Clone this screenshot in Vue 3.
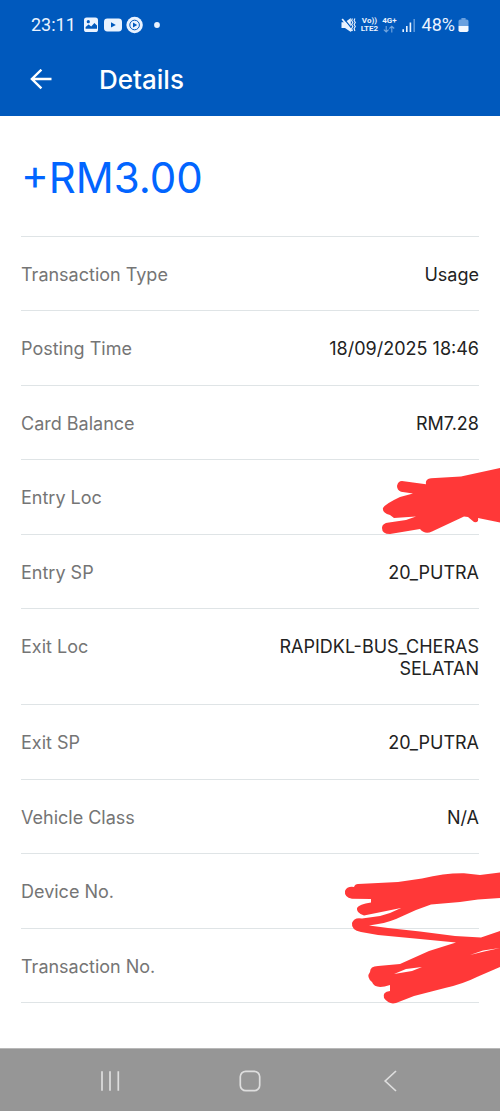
<script setup>
const rows = [
  { label: 'Transaction Type', value: 'Usage' },
  { label: 'Posting Time', value: '18/09/2025 18:46' },
  { label: 'Card Balance', value: 'RM7.28' },
  { label: 'Entry Loc', value: '', mark: 'entry' },
  { label: 'Entry SP', value: '20_PUTRA' },
  { label: 'Exit Loc', value: 'RAPIDKL-BUS_CHERAS SELATAN' },
  { label: 'Exit SP', value: '20_PUTRA' },
  { label: 'Vehicle Class', value: 'N/A' },
  { label: 'Device No.', value: '', mark: 'device' },
  { label: 'Transaction No.', value: '' },
]
</script>

<template>
  <div class="page">
    <header class="top">
      <div class="status">
        <span class="time">23:11</span>
        <svg class="notices" width="78" height="18" viewBox="0 0 78 18" aria-hidden="true">
          <rect x="1" y="1.5" width="14" height="14.5" rx="2.6" fill="#eaf3ff" />
          <circle cx="5.3" cy="5.7" r="1.6" fill="#0059bd" />
          <path d="M2.6 12.8V11l3-2.6 2.6 2.2 3.2-3.7 2.6 2.6v3.3z" fill="#0059bd" />
          <rect x="21" y="2.5" width="18" height="13" rx="3.4" fill="#eaf3ff" />
          <path d="M28 6.2v5.4l4.8-2.7z" fill="#0059bd" />
          <circle cx="51.6" cy="9" r="8.2" fill="#eaf3ff" />
          <circle cx="51.6" cy="9" r="4.8" fill="none" stroke="#0059bd" stroke-width="1" />
          <path d="M50 6.4v5.2l4.2-2.6z" fill="#0059bd" />
          <circle cx="74" cy="9" r="2.9" fill="#eaf3ff" />
        </svg>
        <span class="spacer"></span>
        <svg width="16" height="18" viewBox="0 0 16 18" aria-hidden="true">
          <path d="M.5 6.3H4L9.800 2v14L4 12H.5z" fill="#eaf3ff" />
          <path d="M2.600 2.300 11 12.600" stroke="#0059bd" stroke-width="1.300" />
          <path d="M1.200 2.900 10.600 15" stroke="#eaf3ff" stroke-width="1.700" />
          <path d="m11.400 2.500-.8 2 1.200 2-1.200 2 1.200 2-1.200 2 .8 2.500M13.900 2.500l-.8 2 1.200 2-1.200 2 1.200 2-1.200 2 .8 2.500" fill="none" stroke="#eaf3ff" stroke-width="1.100" />
        </svg>
        <span class="net"><span>Vo))</span><span>LTE2</span></span>
        <span class="net">
          <span>4G+</span>
          <svg width="12" height="8" viewBox="0 0 12 8" aria-hidden="true">
            <path d="M3.2 1v6M.8 4.7 3.2 7l2.4-2.3M8.8 7.4V1M6.4 3.5 8.8 1.2l2.4 2.3" fill="none" stroke="#73a6de" stroke-width="1.1" />
          </svg>
        </span>
        <svg class="signal" width="14" height="16" viewBox="0 0 14 16" aria-hidden="true">
          <path d="M1.2 12.2V15M4.8 9v6M8.4 5.4V15" stroke="#eaf3ff" stroke-width="1.6" />
          <path d="M12.2 2v13" stroke="#5b97d9" stroke-width="1.6" />
        </svg>
        <span class="percent">48%</span>
        <svg width="11" height="16" viewBox="0 0 11 16" aria-hidden="true">
          <path d="M3.4 1h4.2v1.6h1.2q1.7 0 1.7 1.7V9H.5V4.3q0-1.7 1.7-1.7h1.2z" fill="#69a0df" />
          <path d="M.5 9h10v4.2q0 1.8-1.8 1.800H2.300Q.5 15 .5 13.2z" fill="#f3f8ff" />
        </svg>
      </div>
      <div class="bar">
        <button class="back" type="button" aria-label="Back">
          <svg width="22" height="22" viewBox="0 0 22 22" aria-hidden="true">
            <path d="M21.500 10H1.900M11.400 .7 1.900 10l9.500 9.300" fill="none" stroke="#fff" stroke-width="2.400" />
          </svg>
        </button>
        <h1>Details</h1>
      </div>
    </header>

    <main>
      <p class="amount">+RM3.00</p>
      <dl>
        <div v-for="row in rows" :key="row.label" class="row">
          <dt>{{ row.label }}</dt>
          <dd>{{ row.value }}</dd>
          <svg v-if="row.mark === 'entry'" class="mark" width="160" height="90" viewBox="0 0 160 90" aria-hidden="true">
            <path d="M62 21 73 22.500 86 24.200Q85 19 91 18.200L121 16.500 160 8V62.500L138 58Q139 63 134 62L128 57 124 56.500 92 71.500Q85 75 80 69L50 74Q42 74 42 68 42 63 49 62.500L66 60 76 56.500 54 58 50 55Q42 53 43 48 45 44 60 37L73 33.500 61 31.800Q57 30 57 26 58 21 62 21Z" />
          </svg>
          <svg v-if="row.mark === 'device'" class="mark lower" width="170" height="150" viewBox="0 0 170 150" aria-hidden="true">
            <path d="M28 24 68 22 92 18.500Q115 13 134 13.300L150 15 170 12.500V38L148 39.500 130 42 101 44.500 86 50 66 59Q55 63.500 39 65.500L58 68 90 71.500 125 76 151 77.500 170 71V107L148 116.500Q133 124 115 128L84 136 66 143Q59 145 54 138 52 132 60 131V125Q45 130 42 122 36 117 40 112 40 106 48 106L70 104 99 91 126 82.500 90 79 48 75 31 72Q21 70 22 63 24 57 32 58.500L50 56 60 53 71 48 34 55.500Q26 53 27 48 29 44 41 42.500V39L22 38.800Q14 37 15 31 17 26 24 27Q25 24 28 24Z" />
            <path d="M64 114 76 109 92 107 82 111ZM140 95 153 90.500 170 88 153 91.800Z" fill="#fff" />
          </svg>
        </div>
      </dl>
    </main>

    <nav>
      <button type="button" aria-label="Recent apps">
        <svg width="22" height="22" viewBox="0 0 22 22" aria-hidden="true">
          <path d="M3 1.300v19.400M11 1.300v19.400M19.300 1.300v19.400" />
        </svg>
      </button>
      <button type="button" aria-label="Home">
        <svg width="22" height="22" viewBox="0 0 22 22" aria-hidden="true">
          <rect x="1.300" y="1.300" width="19.400" height="19.400" rx="5.500" />
        </svg>
      </button>
      <button type="button" aria-label="Back">
        <svg width="22" height="22" viewBox="0 0 22 22" aria-hidden="true">
          <path d="M17 1 6.200 11 17 21" />
        </svg>
      </button>
    </nav>
  </div>
</template>

<style>
body {
  margin: 0;
}
</style>

<style scoped>
.page {
  display: flex;
  flex-direction: column;
  min-height: 100vh;
  overflow: hidden;
  background: #fff;
  font-family: Inter, "Liberation Sans", sans-serif;
}
svg {
  display: block;
  flex: none;
}
button {
  display: flex;
  align-items: center;
  justify-content: center;
  padding: 0;
  border: 0;
  background: none;
}
.top {
  background: #0059bd;
  color: #fff;
}
.status {
  display: flex;
  align-items: center;
  height: 50px;
  padding: 0 31px;
  color: #eaf3ff;
  font: 18px/20px Roboto, sans-serif;
}
.notices {
  margin-left: 7px;
}
.spacer {
  flex: 1;
}
.net {
  display: flex;
  flex-direction: column;
  align-items: center;
  margin-left: 4px;
  font-size: 8px;
  font-weight: 700;
  line-height: 8px;
}
.signal {
  margin: 0 6px 0 5px;
}
.percent {
  margin-right: 3px;
}
.bar {
  display: flex;
  align-items: center;
  gap: 47px;
  height: 66px;
  padding: 0 30px 6px;
  box-sizing: border-box;
}
h1 {
  margin: 0;
  font-size: 26px;
  font-weight: 500;
  line-height: 32px;
}
main {
  display: flex;
  flex: 1;
  flex-direction: column;
  padding: 0 21px 45px;
}
.amount {
  margin: 0;
  padding: 36px 0 32px;
  color: #0265ff;
  font-size: 42px;
  line-height: 52px;
}
dl {
  display: flex;
  flex: 1;
  flex-direction: column;
  margin: 0;
  border-top: 1px solid #dfe4e6;
}
.row {
  position: relative;
  display: flex;
  flex: 1 0 auto;
  align-items: flex-start;
  justify-content: space-between;
  gap: 20px;
  padding: 27px 0 24px;
  border-bottom: 1px solid #dfe4e6;
  font-size: 18px;
  line-height: 22px;
}
dt {
  color: #757575;
}
dd {
  max-width: 220px;
  margin: 0;
  color: #222;
  text-align: right;
}
.mark {
  position: absolute;
  z-index: 1;
  top: 0;
  right: -21px;
  fill: #ff3838;
}
.lower {
  top: 6px;
}
nav {
  display: flex;
  align-items: center;
  justify-content: space-around;
  height: 63px;
  padding: 2px 40px 0;
  border-top: 1px solid #b8b8b8;
  box-sizing: border-box;
  background: #969696;
}
nav button {
  width: 48px;
  height: 48px;
}
nav svg {
  fill: none;
  stroke: #dedede;
  stroke-width: 1.7;
}
</style>
